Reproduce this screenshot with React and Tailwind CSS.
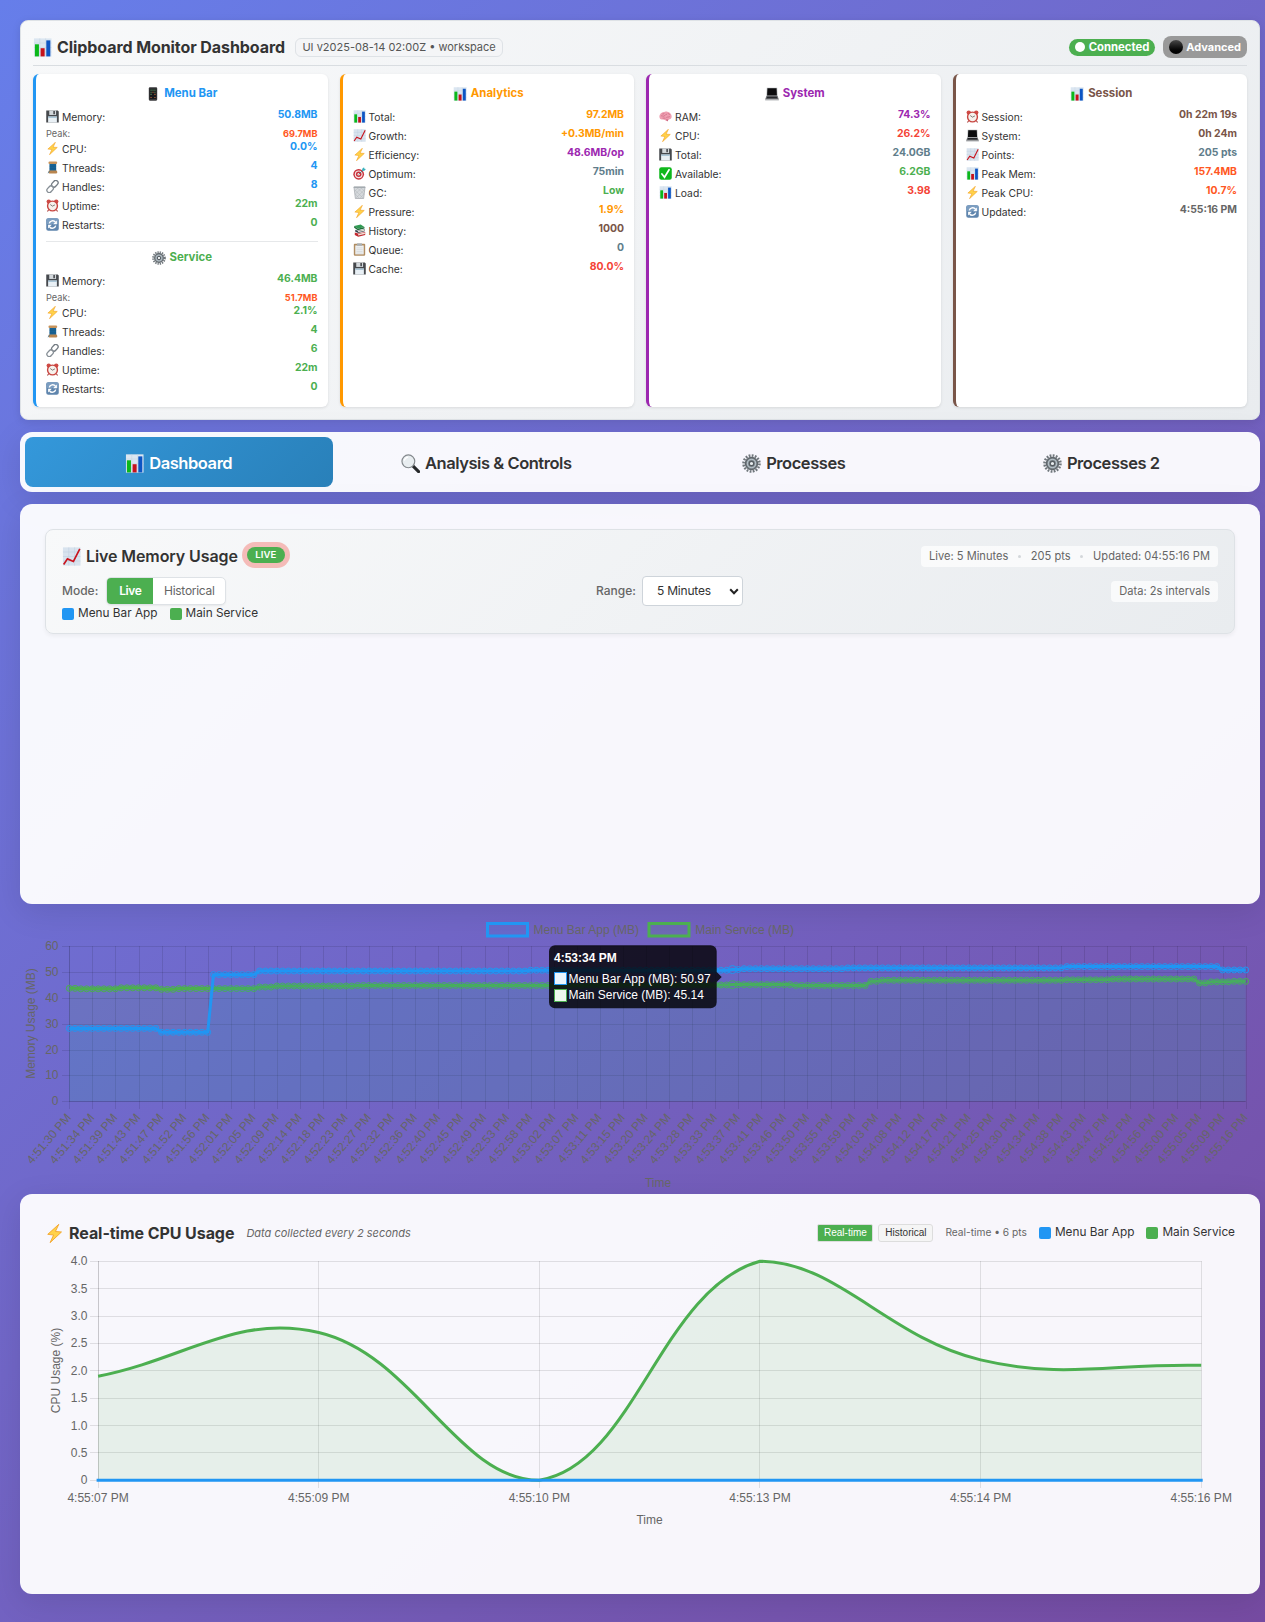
import React from "react";

/* ---------- pictograms, all drawn on a 16 × 16 grid ---------- */

const GLYPHS = {
  bars: (
    <>
      <rect x="0.8" y="0.3" width="14.8" height="15.4" fill="#dbe6f1" />
      <path d="M.8 4.2h14.8M.8 8h14.8M.8 11.8h14.8M5.7 .3v15.4M10.6 .3v15.4" stroke="#c3d2e2" strokeWidth=".4" />
      <rect x="1.6" y="5.3" width="3.4" height="10.2" fill="#0bb81a" />
      <rect x="6.4" y="8.6" width="3.4" height="6.9" fill="#c5121b" />
      <rect x="11.2" y="2" width="3.4" height="13.5" fill="#0c55c4" />
    </>
  ),
  trend: (
    <>
      <rect x="0.8" y="0.3" width="14.8" height="15.4" fill="#d8e3ee" />
      <path d="M.8 4.2h14.8M.8 8h14.8M.8 11.8h14.8M5.7 .3v15.4M10.6 .3v15.4" stroke="#bccbdc" strokeWidth=".4" />
      <path d="M1.4 14.8 4.6 10l5 2.2L15 1.5" fill="none" stroke="#c9141d" strokeWidth="1.4" />
    </>
  ),
  phone: (
    <>
      <rect x="3.2" y="0.3" width="9.6" height="15.4" rx="1.3" fill="#3a3a3c" />
      <rect x="4.2" y="2" width="7.6" height="11.6" fill="#17181b" />
      <path d="M5 3.6h1.6M7.2 3.6h1.6M9.4 3.6h1.6M5 6h1.6M9.4 6h1.6M5 8.4h1.6" stroke="#4d7a56" strokeWidth="1.3" />
      <path d="M7.2 6h1.6M9.4 8.4h1.6M5 12h1.6M9.4 12h1.6" stroke="#9b5a35" strokeWidth="1.3" />
    </>
  ),
  floppy: (
    <>
      <path d="M.3 .5h14.2l1.2 1.2v13.8H.3z" fill="#46494d" />
      <rect x="4" y="0.5" width="8.4" height="5.6" fill="#d3d8dc" />
      <rect x="9" y="1.2" width="2" height="4" fill="#494c50" />
      <rect x="2.6" y="8" width="10.8" height="7.5" fill="#e9f0f5" />
      <path d="M2.6 8h10.8v1.8H2.6z" fill="#a7c4d6" />
    </>
  ),
  bolt: (
    <path d="M11.6 .3 2.3 8.7l4.9.6-2.9 6.4 9.6-9-5.1-.4z" fill="#ffd24a" stroke="#f2a024" strokeWidth=".7" strokeLinejoin="round" />
  ),
  thread: (
    <>
      <path d="M4.3 3.2h8.2v9H4.3z" fill="#1b6a9d" />
      <path d="M4.3 5h8.2M4.3 7h8.2M4.3 9h8.2M4.3 11h8.2" stroke="#124d78" strokeWidth=".6" />
      <rect x="3" y="11.8" width="10.8" height="3.6" rx="1.5" fill="#b9854f" />
      <rect x="3" y="0.5" width="10.8" height="3.2" rx="1.5" fill="#c7935b" />
      <path d="M4.5 12.2 2.4 15" stroke="#1b6a9d" strokeWidth=".7" />
    </>
  ),
  link: (
    <g fill="none" strokeWidth="1.6">
      <rect x="6.4" y="1.7" width="9" height="5.8" rx="2.9" transform="rotate(-48 10.9 4.6)" stroke="#747c83" />
      <rect x="0.6" y="8.5" width="9" height="5.8" rx="2.900" transform="rotate(-48 5.1 11.4)" stroke="#868e95" />
    </g>
  ),
  alarm: (
    <>
      <path d="M3.2 13.2 1.8 15.4M12.8 13.2l1.4 2.2" stroke="#a93b37" strokeWidth="1.3" />
      <circle cx="3.4" cy="3.2" r="2.7" fill="#cf4a45" />
      <circle cx="12.6" cy="3.2" r="2.7" fill="#cf4a45" />
      <circle cx="8" cy="8.6" r="6.9" fill="#c8443f" />
      <circle cx="8" cy="8.6" r="5.2" fill="#f6f1ec" />
      <path d="M5.2 6.8 8 8.8l3-1.6" fill="none" stroke="#44403e" strokeWidth=".8" />
    </>
  ),
  refresh: (
    <>
      <rect x="0.3" y="0.3" width="15.4" height="15.4" rx="2.6" fill="#5f85ad" />
      <path d="M.3 7.500V2.900A2.600 2.600 0 0 1 2.900.3h10.200a2.600 2.600 0 0 1 2.600 2.600v4.600z" fill="#7b9dc0" />
      <path d="M4 6.600a4.400 4.400 0 0 1 7.600-1.700M12 9.400a4.400 4.400 0 0 1-7.600 1.700" fill="none" stroke="#fff" strokeWidth="1.700" />
      <path d="M13.400 3v4.800H8.800zM2.600 13V8.200h4.600z" fill="#fff" />
    </>
  ),
  gear: (
    <>
      <circle cx="8" cy="8" r="6.7" fill="none" stroke="#70777c" strokeWidth="2.2" strokeDasharray="1.5 1.13" />
      <circle cx="8" cy="8" r="5" fill="#8e979d" stroke="#60676c" strokeWidth="1.3" />
      <circle cx="8" cy="8" r="3.4" fill="none" stroke="#bcc8d0" strokeWidth=".8" />
      <circle cx="8" cy="8" r="1.9" fill="#e9edef" stroke="#555c61" strokeWidth="1.1" />
    </>
  ),
  target: (
    <>
      <circle cx="7" cy="9" r="6.6" fill="#c9303a" />
      <circle cx="7" cy="9" r="4.8" fill="#f3e6e6" />
      <circle cx="7" cy="9" r="3.4" fill="#c9303a" />
      <circle cx="7" cy="9" r="1.5" fill="#f3e6e6" />
      <path d="m7 9 5.4-5.2" stroke="#4b6a73" strokeWidth="1" />
      <path d="m11 5 .4-3L13.6.2l.4 1.9 1.9.4L14 4.7z" fill="#39b1bd" />
    </>
  ),
  trash: (
    <>
      <path d="M1.2 1.4h13.6l-1.7 14H2.9z" fill="#d5d9dc" stroke="#9da3a8" strokeWidth=".8" />
      <path d="M2.2 5 12.6 15M2.8 10l4.6 5M5 2l9 8.4M9.6 2l4.6 4.4M13.8 5 3.4 15M13.2 10l-4.6 5M11 2 2.4 10.4M6.4 2 2 6.4" stroke="#aab0b5" strokeWidth=".5" />
      <rect x="0.6" y="0.6" width="14.8" height="1.8" rx=".9" fill="#a4abb0" />
    </>
  ),
  books: (
    <>
      <path d="M1.4 2.6 9.5.6l4.6 3-8.2 2.2z" fill="#2f9a52" />
      <path d="M1.4 2.6v2l4.5 3 8.2-2V3.8L5.9 5.8z" fill="#1d6c38" />
      <path d="M2.8 7.2 6 8.2l8.6-1.8v2.6L6.4 11 2.8 9.4z" fill="#3a4350" />
      <path d="m6 8.6 8.4-1.8v1.4L6.4 10z" fill="#e6dfd2" />
      <path d="m2.2 10.4 4 1.4 8.8-2v3.8l-8.6 2-4.2-2z" fill="#c2262e" />
      <path d="m6.4 12.4 8.2-1.9v1.9l-8.2 1.8z" fill="#efe7da" />
    </>
  ),
  clipboard: (
    <>
      <rect x="1" y="1" width="14" height="14.6" rx="1" fill="#b08d62" />
      <rect x="2.8" y="3" width="10.4" height="11" fill="#eef0f1" />
      <path d="M4.2 6h7.6M4.2 8.2h7.6M4.2 10.4h7.6M4.2 12.4h7.6" stroke="#c3c8cc" strokeWidth=".6" />
      <path d="M5 .4h6v3H5z" fill="#a9afb4" />
    </>
  ),
  laptop: (
    <>
      <path d="M2.1.8h11.8l.5 9.6H1.6z" fill="#b4b7ba" />
      <path d="M2.8 1.5h10.4l.4 8.2H2.4z" fill="#0c0c0e" />
      <path d="M1.6 10.4h12.8l1.4 4H.2z" fill="#67696d" />
      <path d="M2.6 11.2h10.8l.6 1.7H2z" fill="#24262a" />
      <path d="M.2 14.2h15.6v1.1H.2z" fill="#a6a9ad" />
    </>
  ),
  brain: (
    <>
      <path d="M.5 8.400C.3 5 3.200 2.200 7.600 2c4.600-.2 8 2.500 8 6 0 2.400-1.600 3.600-3.800 3.700-.9 1.500-2.300 2.200-3.600 1.200-1.300-1-2.500-1.400-4.200-1.200C1.800 12 .6 10.500.5 8.400z" fill="#ee9fb1" />
      <path d="M2.400 7.400c1.600-1 2.400 1 4 0s1.600-2.400 3.400-2M4 4.800c1 .4 2 .2 2.600-1M9 9.400c1.400-1.200 3-.2 4.400-1.400M4.400 10c1.400-.4 2.400.4 3.600 0M11.400 3.800c-.4 1 .8 1.600 2 1.600" fill="none" stroke="#c9617d" strokeWidth=".8" />
      <path d="M8.400 11.600c1.600.4 2.600-.2 3.400 0l-1.600 2.600z" fill="#c9617d" />
    </>
  ),
  check: (
    <>
      <rect x="0.3" y="0.3" width="15.4" height="15.4" rx="2.6" fill="#0fb81c" />
      <path d="m3.600 8.600 3.200 4L12.400 3.400" fill="none" stroke="#fff" strokeWidth="2.100" strokeLinecap="round" />
    </>
  ),
  lens: (
    <>
      <path d="m9.800 9.800 5 5" stroke="#26282a" strokeWidth="2.600" strokeLinecap="round" />
      <circle cx="6.200" cy="6.200" r="5.400" fill="#e8edf0" stroke="#84898d" strokeWidth="1" />
      <path d="M2.800 5.600a3.600 3.600 0 0 1 3.200-3" fill="none" stroke="#fff" strokeWidth="1" />
    </>
  ),
};

function Icon({ name, className }) {
  return (
    <svg viewBox="0 0 16 16" className={className} aria-hidden="true">
      {GLYPHS[name]}
    </svg>
  );
}

/* ---------- metric cards ---------- */

const blue = "text-[#2196f3]";
const green = "text-[#4caf50]";
const orange = "text-[#ff9800]";
const purple = "text-[#9c27b0]";
const slate = "text-[#607d8b]";
const brown = "text-[#795548]";
const red = "text-[#f44336]";
const deep = "text-[#ff5722]";
const grey = "text-[#666666]";

function CardTitle({ icon, color, children }) {
  return (
    <div className={"flex h-5 items-center justify-center gap-[4px] text-[11.4px] font-bold " + color}>
      <Icon name={icon} className="size-[14px]" />
      <span>{children}</span>
    </div>
  );
}

function Row({ icon, label, value, color }) {
  return (
    <div className="mb-[2px] flex h-[17px] items-start justify-between">
      <span className="flex items-center gap-[3px] pt-[3px] text-[10.3px] leading-[15px] text-[#333333]">
        <Icon name={icon} className="-mt-[2px] size-[13px]" />
        {label}:
      </span>
      <span className={"text-[10.4px] font-bold leading-[15px] " + color}>{value}</span>
    </div>
  );
}

function Peak({ value }) {
  return (
    <div className="flex h-[13px] items-center justify-between pt-[2px] text-[9.2px]">
      <span className="text-[#666666]">Peak:</span>
      <span className={"font-bold " + deep}>{value}</span>
    </div>
  );
}

function Card({ border, children }) {
  return (
    <div className={"h-[333px] rounded-[6px] border-l-[3px] bg-white p-[10px] shadow-[0_1px_3px_rgba(0,0,0,0.1)] " + border}>
      {children}
    </div>
  );
}

function Rows({ rows }) {
  return rows.map(([icon, label, value, color]) => (
    <Row key={label} icon={icon} label={label} value={value} color={color} />
  ));
}

function ProcessBlock({ memory, peak, cpu, threads, handles, color }) {
  return (
    <div className="mt-[3px]">
      <Row icon="floppy" label="Memory" value={memory} color={color} />
      <Peak value={peak} />
      <Rows
        rows={[
          ["bolt", "CPU", cpu, color],
          ["thread", "Threads", threads, color],
          ["link", "Handles", handles, color],
          ["alarm", "Uptime", "22m", green],
          ["refresh", "Restarts", "0", green],
        ]}
      />
    </div>
  );
}

function Header() {
  return (
    <header className="h-[400px] rounded-[8px] border border-[#dee2e6] bg-linear-135 from-[#f8f9fa] to-[#e9ecef] px-3 shadow-[0_2px_8px_rgba(0,0,0,0.1)]">
      <div className="mt-[8px] flex h-[37px] items-center justify-between border-b border-[#d9dde1]">
        <div className="flex items-center">
          <Icon name="bars" className="mr-[5px] size-[19px]" />
          <h1 className="text-[16px] font-bold tracking-[-0.08px] text-[#333333]">Clipboard Monitor Dashboard</h1>
          <span className="ml-[10px] flex h-[19px] items-center rounded-[6px] border border-[#dee2e6] bg-[#f4f5f7] px-[6.5px] text-[11px] text-[#555555]">
            UI v2025-08-14 02:00Z • workspace
          </span>
        </div>
        <div className="flex items-center gap-2 text-[11px] font-bold text-white">
          <span className="flex h-[17px] items-center gap-[4px] rounded-full bg-[#4caf50] px-[6px] text-[11.3px]">
            <span className="size-[10px] rounded-full bg-white" />
            Connected
          </span>
          <span className="flex h-[22px] items-center gap-[3px] rounded-[8px] bg-[#999999] px-[6px]">
            <span className="size-[14px] rounded-full bg-linear-to-b from-[#4a4a4a] to-black" />
            Advanced
          </span>
        </div>
      </div>
      <div className="mt-[8px] grid grid-cols-4 gap-3">
        <Card border="border-[#2196f3]">
          <CardTitle icon="phone" color={blue}>Menu Bar</CardTitle>
          <ProcessBlock memory="50.8MB" peak="69.7MB" cpu="0.0%" threads="4" handles="8" color={blue} />
          <div className="mt-[9px] mb-[6px] h-px bg-[#e6e8ea]" />
          <CardTitle icon="gear" color={green}>Service</CardTitle>
          <ProcessBlock memory="46.4MB" peak="51.7MB" cpu="2.1%" threads="4" handles="6" color={green} />
        </Card>
        <Card border="border-[#ff9800]">
          <CardTitle icon="bars" color={orange}>Analytics</CardTitle>
          <div className="mt-[3px]">
            <Rows
              rows={[
                ["bars", "Total", "97.2MB", orange],
                ["trend", "Growth", "+0.3MB/min", orange],
                ["bolt", "Efficiency", "48.6MB/op", purple],
                ["target", "Optimum", "75min", slate],
                ["trash", "GC", "Low", green],
                ["bolt", "Pressure", "1.9%", orange],
                ["books", "History", "1000", brown],
                ["clipboard", "Queue", "0", slate],
                ["floppy", "Cache", "80.0%", red],
              ]}
            />
          </div>
        </Card>
        <Card border="border-[#9c27b0]">
          <CardTitle icon="laptop" color={purple}>System</CardTitle>
          <div className="mt-[3px]">
            <Rows
              rows={[
                ["brain", "RAM", "74.3%", purple],
                ["bolt", "CPU", "26.2%", red],
                ["floppy", "Total", "24.0GB", slate],
                ["check", "Available", "6.2GB", green],
                ["bars", "Load", "3.98", red],
              ]}
            />
          </div>
        </Card>
        <Card border="border-[#795548]">
          <CardTitle icon="bars" color={brown}>Session</CardTitle>
          <div className="mt-[3px]">
            <Rows
              rows={[
                ["alarm", "Session", "0h 22m 19s", brown],
                ["laptop", "System", "0h 24m", brown],
                ["trend", "Points", "205 pts", slate],
                ["bars", "Peak Mem", "157.4MB", deep],
                ["bolt", "Peak CPU", "10.7%", deep],
                ["refresh", "Updated", "4:55:16 PM", grey],
              ]}
            />
          </div>
        </Card>
      </div>
    </header>
  );
}

/* ---------- tabs ---------- */

function Tab({ icon, active, children }) {
  return (
    <button
      className={
        "flex h-[50px] items-center justify-center gap-[5px] rounded-[8px] pt-[3px] text-[16.5px] font-semibold tracking-[-0.45px] " +
        (active ? "bg-linear-135 from-[#3498db] to-[#2980b9] text-white" : "text-[#333333]")
      }
    >
      <Icon name={icon} className="size-[19px]" />
      {children}
    </button>
  );
}

/* ---------- live memory panel ---------- */

function Swatch({ color, children }) {
  return (
    <span className="flex items-center gap-[4px] text-[11.8px] text-[#333333]">
      <span className={"size-3 rounded-[2px] " + color} />
      {children}
    </span>
  );
}

function Dot() {
  return <span className="size-[3px] rounded-full bg-[#d3d7da]" />;
}

function MemoryPanel() {
  return (
    <section className="h-[400px] rounded-[12px] bg-white/95 p-[25px] shadow-[0_8px_32px_rgba(0,0,0,0.1)]">
      <div className="h-[105px] rounded-[8px] border border-[#dee2e6] bg-linear-135 from-[#f8f9fa] to-[#e9ecef] px-4 pt-[13px] shadow-[0_2px_4px_rgba(0,0,0,0.05)]">
        <div className="flex h-[26px] items-center justify-between">
          <div className="flex items-center">
            <Icon name="trend" className="mr-[5px] size-[19px]" />
            <h2 className="text-[16px] font-semibold tracking-[-0.1px] text-[#333333]">Live Memory Usage</h2>
            <span className="-mt-[2px] ml-[9px] flex h-4 w-[38px] items-center justify-center rounded-full bg-[#4caf50] text-[9.6px] font-semibold text-white shadow-[0_0_0_5px_rgba(244,67,54,0.33)]">
              LIVE
            </span>
          </div>
          <div className="flex h-[21px] w-[297px] items-center justify-between rounded-[4px] bg-white/70 px-2 pt-px text-[11.1px] text-[#666666]">
            <span>Live: 5 Minutes</span>
            <Dot />
            <span>205 pts</span>
            <Dot />
            <span>Updated: 04:55:16 PM</span>
          </div>
        </div>
        <div className="mt-[6px] flex h-[32px] items-center">
          <div className="flex w-[534px] items-center">
            <span className="text-[12px] font-medium text-[#666666]">Mode:</span>
            <div className="ml-[8px] flex h-[28px] w-[120px] overflow-hidden rounded-[5px] border border-[#dee2e6] bg-white text-[12px] shadow-[0_1px_2px_rgba(0,0,0,0.06)]">
              <button className="w-[46px] bg-[#4caf50] font-semibold tracking-[-0.4px] text-white">Live</button>
              <button className="grow tracking-[-0.3px] text-[#666666]">Historical</button>
            </div>
          </div>
          <span className="text-[12px] font-medium text-[#666666]">Range:</span>
          <div className="ml-[6px] flex h-[30px] w-[101px] items-center justify-between rounded-[4px] border border-[#ced4da] bg-white pr-[3px] pl-[14px] text-[12px] tracking-[-0.2px] text-[#333333]">
            5 Minutes
            <svg viewBox="0 0 10 10" className="size-[10px]" aria-hidden="true">
              <path d="m1.200 3.200 3.800 4 3.800-4" fill="none" stroke="#222" strokeWidth="2" />
            </svg>
          </div>
          <span className="ml-auto flex h-[21px] items-center rounded-[4px] bg-white/70 px-2 pt-px text-[11.1px] text-[#666666]">
            Data: 2s intervals
          </span>
        </div>
        <div className="flex h-[14px] items-center gap-3">
          <Swatch color="bg-[#2196f3]">Menu Bar App</Swatch>
          <Swatch color="bg-[#4caf50]">Main Service</Swatch>
        </div>
      </div>
    </section>
  );
}

/* ---------- memory chart ---------- */

const TIMES = (
  "4:51:30 4:51:34 4:51:39 4:51:43 4:51:47 4:51:52 4:51:56 4:52:01 4:52:05 4:52:09 4:52:14 4:52:18 4:52:23 " +
  "4:52:27 4:52:32 4:52:36 4:52:40 4:52:45 4:52:49 4:52:53 4:52:58 4:53:02 4:53:07 4:53:11 4:53:15 4:53:20 " +
  "4:53:24 4:53:28 4:53:33 4:53:37 4:53:41 4:53:46 4:53:50 4:53:55 4:53:59 4:54:03 4:54:08 4:54:12 4:54:17 " +
  "4:54:21 4:54:25 4:54:30 4:54:34 4:54:38 4:54:43 4:54:47 4:54:52 4:54:56 4:55:00 4:55:05 4:55:09 4:55:16"
).split(" ");

// [first sample index, value] steps
const MENU_STEPS = [[0, 28.2], [16, 26.7], [25, 49], [33, 50.4], [80, 50.7], [115, 50.97], [117, 51.3], [135, 51.6], [173, 52.1], [200, 50.8]];
const SERVICE_STEPS = [[0, 43.7], [2, 43.5], [9, 43.9], [16, 43.3], [19, 43.6], [33, 44.2], [36, 44.6], [50, 44.8], [90, 45], [115, 45.14], [126, 44.8], [139, 46.4], [141, 46.8], [173, 47.0], [181, 47.3], [196, 45.8], [198, 46.2], [202, 46.4]];

const expand = (steps) => {
  const out = [];
  for (let i = 0; i < 205; i++) {
    let v = steps[0][1];
    for (const [from, val] of steps) if (i >= from) v = val;
    out.push(v);
  }
  return out;
};

const ML = 49.3;
const MR = 1225.7;
const MX = (i) => ML + (i * (MR - ML)) / 204;
const MY = (v) => 197.3 - v * 2.585;

function Series({ values, color }) {
  const line = values.map((v, i) => MX(i).toFixed(2) + "," + MY(v).toFixed(2)).join(" ");
  return (
    <g>
      <polygon points={ML + "," + MY(0) + " " + line + " " + MR + "," + MY(0)} fill={color} fillOpacity="0.1" />
      <polyline points={line} fill="none" stroke={color} strokeWidth="3" strokeLinejoin="round" />
      {values.map((v, i) => (
        <circle key={i} cx={MX(i)} cy={MY(v)} r={i === 115 ? 4 : 3} fill={color} fillOpacity="0.1" stroke={color} strokeWidth="1" />
      ))}
    </g>
  );
}

function MemoryChart() {
  return (
    <svg width="1240" height="290" viewBox="0 0 1240 290" className="block overflow-visible font-['Liberation_Sans',Arial,sans-serif] text-[12px]">
      <g stroke="#000" strokeOpacity="0.1" strokeWidth="1">
        {[0, 10, 20, 30, 40, 50, 60].map((v) => (
          <line key={v} x1="42" x2={MR} y1={Math.round(MY(v)) + 0.5} y2={Math.round(MY(v)) + 0.5} />
        ))}
        {TIMES.map((t, i) => (
          <line key={t} x1={Math.round(MX(i * 4)) + 0.5} x2={Math.round(MX(i * 4)) + 0.5} y1="42" y2="205" />
        ))}
        <line x1="49.5" x2="49.5" y1="42" y2="197" />
        <line x1="49" x2={MR} y1="197.5" y2="197.5" />
      </g>
      <g fill="#666">
        {[0, 10, 20, 30, 40, 50, 60].map((v) => (
          <text key={v} x="38.5" y={MY(v) + 4} textAnchor="end">{v}</text>
        ))}
        {TIMES.map((t, i) => (
          <text key={t} textAnchor="end" transform={"translate(" + (MX(i * 4) + 2.5).toFixed(1) + " 214) rotate(-49.5)"}>
            {t + " PM"}
          </text>
        ))}
        <text textAnchor="middle" transform="translate(15 119.5) rotate(-90)">Memory Usage (MB)</text>
        <text x="638" y="283" textAnchor="middle">Time</text>
        <text x="513.5" y="30">Menu Bar App (MB)</text>
        <text x="675.3" y="30">Main Service (MB)</text>
      </g>
      <rect x="467.5" y="19.5" width="40" height="12.5" fill="#2196f3" fillOpacity="0.1" stroke="#2196f3" strokeWidth="3" />
      <rect x="629" y="19.5" width="40" height="12.5" fill="#4caf50" fillOpacity="0.1" stroke="#4caf50" strokeWidth="3" />
      <Series values={expand(SERVICE_STEPS)} color="#4caf50" />
      <Series values={expand(MENU_STEPS)} color="#2196f3" />
      <g>
        <path d="M535 41.3h155.700a6 6 0 0 1 6 6v20.700l5 5-5 5v20.300a6 6 0 0 1-6 6H535a6 6 0 0 1-6-6v-51a6 6 0 0 1 6-6z" fill="#000" fillOpacity="0.8" />
        <g fill="#fff">
          <text x="534" y="58" fontWeight="bold">4:53:34 PM</text>
          <text x="548.5" y="79">Menu Bar App (MB): 50.97</text>
          <text x="548.5" y="95">Main Service (MB): 45.14</text>
        </g>
        <rect x="534.5" y="68.5" width="12" height="12" fill="#e9f5fe" stroke="#2196f3" />
        <rect x="534.5" y="85.5" width="12" height="12" fill="#edf7ee" stroke="#4caf50" />
      </g>
    </svg>
  );
}

/* ---------- CPU chart ---------- */

const CPU_TIMES = ["4:55:07 PM", "4:55:09 PM", "4:55:10 PM", "4:55:13 PM", "4:55:14 PM", "4:55:16 PM"];
const CPU_VALUES = [1.9, 2.7, 0, 4, 2.2, 2.1];
const CL = 53.1;
const CR = 1156.2;
const CX = (i) => CL + (i * (CR - CL)) / 5;
const CY = (v) => 231.3 - v * 54.75;

// Cardinal spline with tension 0.4; control points stay inside the plot area.
function splinePath(values) {
  const pts = values.map((v, i) => ({ x: CX(i), y: CY(v) }));
  const clamp = (y) => Math.min(CY(0), Math.max(CY(4), y));
  const ctl = pts.map((p, i) => {
    const a = pts[Math.max(0, i - 1)];
    const b = pts[Math.min(pts.length - 1, i + 1)];
    const d1 = Math.hypot(p.x - a.x, p.y - a.y);
    const d2 = Math.hypot(b.x - p.x, b.y - p.y);
    const f1 = (0.4 * d1) / (d1 + d2);
    const f2 = (0.4 * d2) / (d1 + d2);
    return {
      px: p.x - f1 * (b.x - a.x),
      py: clamp(p.y - f1 * (b.y - a.y)),
      nx: p.x + f2 * (b.x - a.x),
      ny: clamp(p.y + f2 * (b.y - a.y)),
    };
  });
  let d = "M" + pts[0].x + " " + pts[0].y;
  for (let i = 1; i < pts.length; i++) {
    d += ["C" + ctl[i - 1].nx, ctl[i - 1].ny, ctl[i].px, ctl[i].py, pts[i].x, pts[i].y].join(" ");
  }
  return d;
}

function CpuChart() {
  const path = splinePath(CPU_VALUES);
  return (
    <svg width="1190" height="290" viewBox="0 0 1190 290" className="block overflow-visible font-['Liberation_Sans',Arial,sans-serif] text-[12px]">
      <g stroke="#000" strokeOpacity="0.1">
        {[0, 0.5, 1, 1.5, 2, 2.5, 3, 3.5, 4].map((v) => (
          <line key={v} x1="45" x2="1156.500" y1={Math.floor(CY(v)) + 0.5} y2={Math.floor(CY(v)) + 0.5} />
        ))}
        {CPU_TIMES.map((t, i) => (
          <line key={t} x1={Math.floor(CX(i)) + 0.5} x2={Math.floor(CX(i)) + 0.5} y1="12" y2="239" />
        ))}
        <line x1="53.5" x2="53.5" y1="12" y2="231" />
      </g>
      <g fill="#666">
        {[0, 0.5, 1, 1.5, 2, 2.5, 3, 3.5, 4].map((v) => (
          <text key={v} x="42.5" y={CY(v) + 4} textAnchor="end">{v === 0 ? "0" : v.toFixed(1)}</text>
        ))}
        {CPU_TIMES.map((t, i) => (
          <text key={t} x={CX(i)} y="253" textAnchor="middle">{t}</text>
        ))}
        <text textAnchor="middle" transform="translate(15 121.5) rotate(-90)">CPU Usage (%)</text>
        <text x="604.5" y="275" textAnchor="middle">Time</text>
      </g>
      <path d={path + "L" + CR + " " + CY(0) + "L" + CL + " " + CY(0) + "Z"} fill="#4caf50" fillOpacity="0.1" />
      <path d={path} fill="none" stroke="#4caf50" strokeWidth="3" />
      <path d={"M" + (CL - 1.5) + " " + CY(0) + "H" + (CR + 1.5)} stroke="#2196f3" strokeWidth="3" />
    </svg>
  );
}

function CpuPanel() {
  return (
    <section className="h-[400px] rounded-[12px] bg-white/95 px-[25px] pt-[25px] shadow-[0_8px_32px_rgba(0,0,0,0.1)]">
      <div className="flex h-[28px] items-center justify-between">
        <div className="flex items-center">
          <Icon name="bolt" className="mr-[5px] size-[19px]" />
          <h2 className="text-[16px] font-bold tracking-[-0.06px] text-[#333333]">Real-time CPU Usage</h2>
          <span className="ml-3 pt-px text-[11px] text-[#666666] italic">Data collected every 2 seconds</span>
        </div>
        <div className="flex items-center">
          <button className="h-[18px] w-[56px] rounded-[2px] border border-[#dddddd] bg-[#4caf50] font-['Liberation_Sans',Arial,sans-serif] text-[10px] leading-none text-white">
            Real-time
          </button>
          <button className="ml-[5px] h-[18px] w-[55px] rounded-[3px] border border-[#dddddd] bg-[#f5f5f5] font-['Liberation_Sans',Arial,sans-serif] text-[10px] leading-none text-[#333333]">
            Historical
          </button>
          <span className="mr-3 ml-3 text-[10.2px] text-[#666666]">Real-time • 6 pts</span>
          <div className="flex items-center gap-3">
            <Swatch color="bg-[#2196f3]">Menu Bar App</Swatch>
            <Swatch color="bg-[#4caf50]">Main Service</Swatch>
          </div>
        </div>
      </div>
      <div className="mt-[2px]">
        <CpuChart />
      </div>
    </section>
  );
}

export default function App() {
  return (
    <div className="h-[1622px] w-[1265px] overflow-hidden bg-linear-135 from-[#667eea] to-[#764ba2] pt-5 pl-5 font-['Inter','Liberation_Sans',sans-serif]">
      <div className="w-[1240px]">
        <Header />
        <nav className="mt-3 grid h-[60px] grid-cols-4 rounded-[12px] bg-white/95 p-[5px] shadow-[0_8px_32px_rgba(0,0,0,0.1)]">
          <Tab icon="bars" active>Dashboard</Tab>
          <Tab icon="lens">Analysis &amp; Controls</Tab>
          <Tab icon="gear">Processes</Tab>
          <Tab icon="gear">Processes 2</Tab>
        </nav>
        <main className="mt-3">
          <MemoryPanel />
          <MemoryChart />
          <CpuPanel />
        </main>
      </div>
    </div>
  );
}
